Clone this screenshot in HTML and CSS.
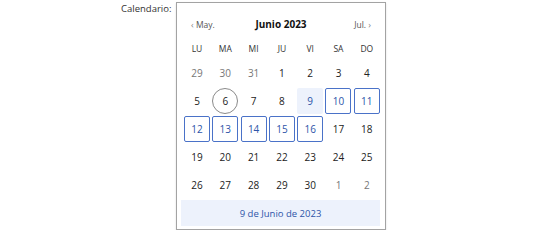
FILE: index.html
```html
<!DOCTYPE html>
<html lang="es">
<head>
<meta charset="utf-8">
<title>Calendario</title>
<link rel="stylesheet" href="styles.css">
</head>
<body>
<div class="wrap">
  <label class="label">Calendario:</label>
  <div class="cal">
    <div class="nav">
      <span class="prev"><span class="arrow">‹</span> May.</span>
      <span class="title">Junio 2023</span>
      <span class="next">Jul. <span class="arrow">›</span></span>
    </div>
    <div class="grid week">
      <span>LU</span><span>MA</span><span>MI</span><span>JU</span><span>VI</span><span>SA</span><span>DO</span>
    </div>
    <div class="grid days">
      <span class="d other">29</span><span class="d other">30</span><span class="d other">31</span><span class="d">1</span><span class="d">2</span><span class="d">3</span><span class="d">4</span>
      <span class="d">5</span><span class="d today">6</span><span class="d">7</span><span class="d">8</span><span class="d sel">9</span><span class="d range">10</span><span class="d range">11</span>
      <span class="d range">12</span><span class="d range">13</span><span class="d range">14</span><span class="d range">15</span><span class="d range">16</span><span class="d">17</span><span class="d">18</span>
      <span class="d">19</span><span class="d">20</span><span class="d">21</span><span class="d">22</span><span class="d">23</span><span class="d">24</span><span class="d">25</span>
      <span class="d">26</span><span class="d">27</span><span class="d">28</span><span class="d">29</span><span class="d">30</span><span class="d other">1</span><span class="d other">2</span>
    </div>
    <div class="footer">9 de Junio de 2023</div>
  </div>
</div>
</body>
</html>
```
FILE: styles.css
```css
html, body {
  margin: 0;
  padding: 0;
  background: #ffffff;
}
body {
  font-family: "Open Sans", "DejaVu Sans", sans-serif;
  color: #222;
}
.wrap {
  display: flex;
  align-items: flex-start;
  padding-left: 121px;
  padding-top: 2px;
}
.label {
  width: 55px;
  font-size: 9.5px;
  line-height: 13px;
  color: #333;
}
.cal {
  box-sizing: border-box;
  width: 210px;
  height: 228px;
  border: 1px solid #a3a3a3;
  box-shadow: 0 1px 2px rgba(0,0,0,0.12);
  padding: 0 5px 3px 4px;
  display: flex;
  flex-direction: column;
}
.nav {
  display: flex;
  align-items: center;
  justify-content: space-between;
  height: 20px;
  margin-top: 11px;
  padding: 0 9px 0 10px;
}
.prev, .next {
  font-size: 8.5px;
  color: #555;
  width: 40px;
}
.next { text-align: right; }
.arrow {
  color: #888;
  font-size: 9px;
}
.title {
  font-weight: 700;
  font-size: 10px;
  color: #111;
}
.grid {
  display: grid;
  grid-template-columns: repeat(7, 26px);
  column-gap: 2.3px;
  margin-left: 3px;
}
.week {
  margin-top: 4px;
  height: 20px;
  align-items: center;
  font-size: 8.5px;
  color: #333;
}
.week span { text-align: center; }
.days {
  margin-top: 2px;
  grid-auto-rows: 26px;
  row-gap: 2px;
}
.d {
  box-sizing: border-box;
  display: flex;
  align-items: center;
  justify-content: center;
  font-size: 10px;
  color: #222;
  border-radius: 2px;
}
.other { color: #777; }
.today {
  border: 1px solid #8a8a8a;
  border-radius: 50%;
}
.sel {
  background: #edf2fc;
  color: #2d55a8;
}
.range {
  border: 1.5px solid #4a72c8;
  color: #2d55a8;
}
.footer {
  margin-top: 2px;
  height: 26px;
  background: #edf2fc;
  color: #2d55a8;
  font-size: 9.5px;
  display: flex;
  align-items: center;
  justify-content: center;
}
```
